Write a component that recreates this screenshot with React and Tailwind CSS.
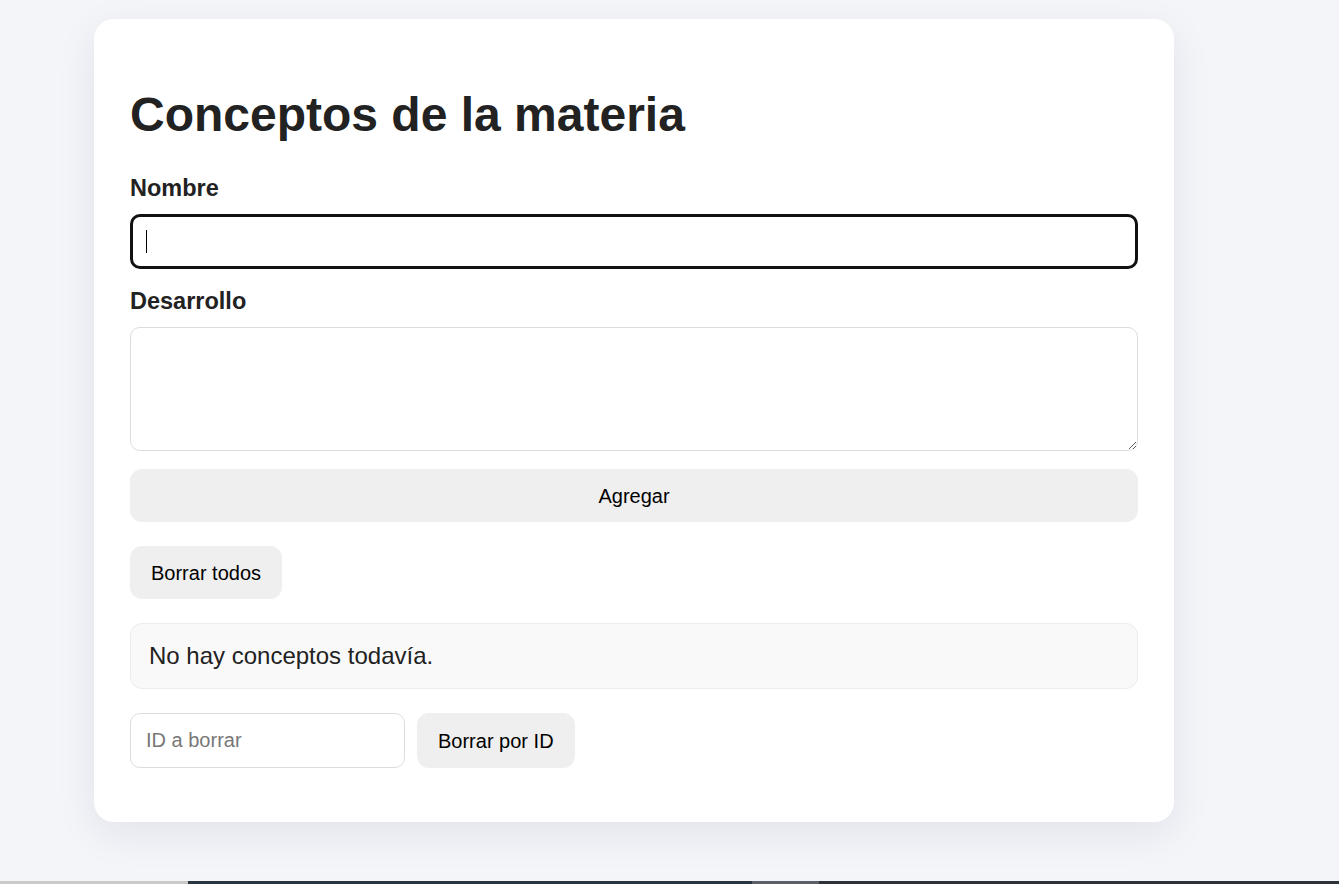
import { useState } from "react";

export default function App() {
  const [nombre, setNombre] = useState("");
  const [desarrollo, setDesarrollo] = useState("");
  const [idBorrar, setIdBorrar] = useState("");

  return (
    <div className="min-h-screen flex flex-col bg-[#f4f5f9] font-['Liberation_Sans',Arial,sans-serif]">
      <div className="flex-1 pt-[19px] pl-[94px]">
        <div className="w-[1080px] bg-white rounded-[20px] shadow-[0_12px_40px_rgba(20,30,60,0.08)] px-[36px] pt-[36px] pb-[54px]">
          <h1 className="mt-[32px] mb-[33px] text-[48px] leading-[55px] font-bold text-[#222]">
            Conceptos de la materia
          </h1>

          <label className="block text-[23.5px] leading-[27px] font-bold text-[#222]">
            Nombre
          </label>
          <div className="relative mt-[12px]">
            <input
              autoFocus
              value={nombre}
              onChange={(e) => setNombre(e.target.value)}
              className="block w-full h-[55px] px-[14px] text-[20px] rounded-[10px] border-[3px] border-[#111] outline-none bg-white caret-transparent"
            />
            {/* caret of the focused field */}
            {nombre === "" && (
              <span className="absolute left-[16px] top-[16px] h-[23px] w-px bg-black pointer-events-none" />
            )}
          </div>

          <label className="block mt-[19px] text-[23.5px] leading-[27px] font-bold text-[#222]">
            Desarrollo
          </label>
          <textarea
            value={desarrollo}
            onChange={(e) => setDesarrollo(e.target.value)}
            className="block w-full mt-[12px] h-[124px] p-[14px] text-[20px] rounded-[10px] border border-[#dcdcdc] outline-none bg-white"
          />

          <button className="block w-full mt-[18px] h-[53px] rounded-[12px] bg-[#efefef] text-[20px] text-black">
            Agregar
          </button>

          <button className="block mt-[24px] h-[53px] px-[21px] rounded-[12px] bg-[#efefef] text-[20px] text-black">
            Borrar todos
          </button>

          <div className="mt-[24px] h-[66px] flex items-center px-[18px] rounded-[12px] bg-[#f9f9f9] border border-[#ececec] text-[24px] text-[#222]">
            No hay conceptos todavía.
          </div>

          <div className="mt-[24px] flex gap-[12px]">
            <input
              value={idBorrar}
              onChange={(e) => setIdBorrar(e.target.value)}
              placeholder="ID a borrar"
              className="w-[275px] h-[55px] px-[15px] text-[20px] rounded-[10px] border border-[#dcdcdc] outline-none bg-white placeholder:text-[#777]"
            />
            <button className="h-[55px] px-[21px] rounded-[12px] bg-[#efefef] text-[20px] text-black">
              Borrar por ID
            </button>
          </div>
        </div>
      </div>

      <div className="h-[3px] flex">
        <div className="w-[188px] bg-[#c9c9c9]" />
        <div className="w-[564px] bg-[#2b3540]" />
        <div className="w-[67px] bg-[#5b6068]" />
        <div className="flex-1 bg-[#2b3238]" />
      </div>
    </div>
  );
}
